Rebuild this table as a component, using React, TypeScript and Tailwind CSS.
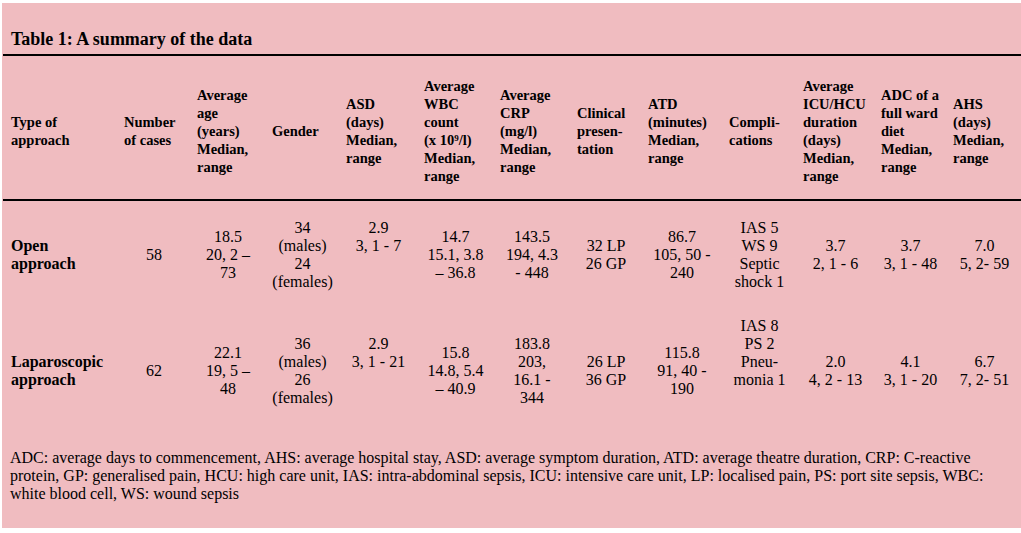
import type { ReactNode } from "react";

type Cell = {
  lines: ReactNode[];
  bold?: boolean;
  left?: boolean;
};

// column widths in px, taken from the left edge of each header
const colWidths = [113, 73, 75, 74, 78, 76, 77, 71, 81, 74, 78, 72, 76];

const headers: ReactNode[][] = [
  ["Type of", "approach"],
  ["Number", "of cases"],
  ["Average", "age", "(years)", "Median,", "range"],
  ["Gender"],
  ["ASD", "(days)", "Median,", "range"],
  [
    "Average",
    "WBC",
    "count",
    <span key="x">
      (x 10<sup className="text-[9px]">9</sup>/l)
    </span>,
    "Median,",
    "range",
  ],
  ["Average", "CRP", "(mg/l)", "Median,", "range"],
  ["Clinical", "presen-", "tation"],
  ["ATD", "(minutes)", "Median,", "range"],
  ["Compli-", "cations"],
  ["Average", "ICU/HCU", "duration", "(days)", "Median,", "range"],
  ["ADC of a", "full ward", "diet", "Median,", "range"],
  ["AHS", "(days)", "Median,", "range"],
];

const rows: { height: string; cells: Cell[] }[] = [
  {
    height: "h-[108px]",
    cells: [
      { lines: ["Open", "approach"], bold: true, left: true },
      { lines: ["58"] },
      { lines: ["18.5", "20, 2 –", "73"] },
      { lines: ["34", "(males)", "24", "(females)"] },
      { lines: ["2.9", "3, 1 - 7", "", ""] },
      { lines: ["14.7", "15.1, 3.8", "– 36.8"] },
      { lines: ["143.5", "194, 4.3", "- 448"] },
      { lines: ["32 LP", "26 GP"] },
      { lines: ["86.7", "105, 50 -", "240"] },
      { lines: ["IAS 5", "WS 9", "Septic", "shock 1"] },
      { lines: ["3.7", "2, 1 - 6"] },
      { lines: ["3.7", "3, 1 - 48"] },
      { lines: ["7.0", "5, 2- 59"] },
    ],
  },
  {
    height: "h-[124px]",
    cells: [
      { lines: ["Laparoscopic", "approach"], bold: true, left: true },
      { lines: ["62"] },
      { lines: ["22.1", "19, 5 –", "48"] },
      { lines: ["36", "(males)", "26", "(females)"] },
      { lines: ["2.9", "3, 1 - 21", "", ""] },
      { lines: ["15.8", "14.8, 5.4", "– 40.9"] },
      { lines: ["183.8", "203,", "16.1 -", "344"] },
      { lines: ["26 LP", "36 GP"] },
      { lines: ["115.8", "91, 40 -", "190"] },
      { lines: ["IAS 8", "PS 2", "Pneu-", "monia 1", "", ""] },
      { lines: ["2.0", "4, 2 - 13"] },
      { lines: ["4.1", "3, 1 - 20"] },
      { lines: ["6.7", "7, 2- 51"] },
    ],
  },
];

function Lines({ lines }: { lines: ReactNode[] }) {
  return (
    <>
      {lines.map((line, i) => (
        <div key={i} className="leading-[18px] whitespace-nowrap">
          {line === "" ? "\u00a0" : line}
        </div>
      ))}
    </>
  );
}

export default function App() {
  return (
    <div className="min-h-screen bg-white pt-[3px] pl-[2px] [font-family:'Liberation_Serif',serif]">
      <div className="h-[525px] bg-[#f0bcc0] pl-[1px] pt-[25px] text-black">
        {/* Title */}
        <h1 className="pl-2 mb-[4px] text-[18px] leading-[22px] font-bold">
          Table 1: A summary of the data
        </h1>

        <table className="table-fixed border-separate border-spacing-0 border-t-2 border-black w-[1018px]">
          <colgroup>
            {colWidths.map((w, i) => (
              <col key={i} style={{ width: w }} />
            ))}
          </colgroup>
          <thead>
            <tr>
              {headers.map((lines, i) => (
                <th
                  key={i}
                  className="border-b-2 border-black pl-2 pr-[5px] pt-[21px] pb-[14px] text-left align-middle text-[14.5px] font-bold"
                >
                  <Lines lines={lines} />
                </th>
              ))}
            </tr>
          </thead>
          <tbody>
            {rows.map((row, r) => (
              <tr key={r} className={row.height}>
                {row.cells.map((cell, c) => (
                  <td
                    key={c}
                    className={`pl-2 pr-[5px] py-0 align-middle text-[16px] ${
                      cell.bold ? "font-bold" : ""
                    } ${cell.left ? "text-left" : "text-center"}`}
                  >
                    <Lines lines={cell.lines} />
                  </td>
                ))}
              </tr>
            ))}
          </tbody>
        </table>

        {/* Abbreviations */}
        <p className="mt-[16px] pl-[7px] pr-2 text-[16px] leading-[18px]">
          ADC: average days to commencement, AHS: average hospital stay, ASD:
          average symptom duration, ATD: average theatre duration, CRP:
          C-reactive protein, GP: generalised pain, HCU: high care unit, IAS:
          intra-abdominal sepsis, ICU: intensive care unit, LP: localised pain,
          PS: port site sepsis, WBC: white blood cell, WS: wound sepsis
        </p>
      </div>
    </div>
  );
}
